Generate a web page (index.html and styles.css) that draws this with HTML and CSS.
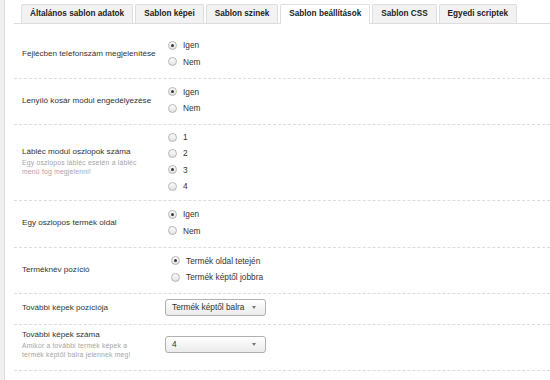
FILE: index.html
```html
<!DOCTYPE html>
<html lang="hu">
<head>
    <meta charset="UTF-8">
    <link rel="stylesheet" href="styles.css">
    <title>Sablon beállítások</title>
</head>
<body>
    <div class="page">
        <div class="side-strip"></div>
        <div class="main">
            <div class="tabs">
                <div class="tab">Általános sablon adatok</div>
                <div class="tab">Sablon képei</div>
                <div class="tab">Sablon szinek</div>
                <div class="tab active">Sablon beállítások</div>
                <div class="tab">Sablon CSS</div>
                <div class="tab">Egyedi scriptek</div>
            </div>

            <div class="tab-content">
                <div class="row">
                    <div class="label">Fejlécben telefonszám megjelenítése</div>
                    <div class="options">
                        <div class="option"><span class="radio checked"></span>Igen</div>
                        <div class="option"><span class="radio"></span>Nem</div>
                    </div>
                </div>

                <div class="row">
                    <div class="label">Lenyíló kosár modul engedélyezése</div>
                    <div class="options">
                        <div class="option"><span class="radio checked"></span>Igen</div>
                        <div class="option"><span class="radio"></span>Nem</div>
                    </div>
                </div>

                <div class="row row-compact">
                    <div class="label">
                        Lábléc modul oszlopok száma
                        <div class="hint">Egy oszlopos lábléc esetén a lábléc menü fog megjelenni!</div>
                    </div>
                    <div class="options">
                        <div class="option"><span class="radio"></span>1</div>
                        <div class="option"><span class="radio"></span>2</div>
                        <div class="option"><span class="radio checked"></span>3</div>
                        <div class="option"><span class="radio"></span>4</div>
                    </div>
                </div>

                <div class="row">
                    <div class="label">Egy oszlopos termék oldal</div>
                    <div class="options">
                        <div class="option"><span class="radio checked"></span>Igen</div>
                        <div class="option"><span class="radio"></span>Nem</div>
                    </div>
                </div>

                <div class="row">
                    <div class="label">Terméknév pozíció</div>
                    <div class="options options-wide">
                        <div class="option"><span class="radio checked"></span>Termék oldal tetején</div>
                        <div class="option"><span class="radio"></span>Termék képtől jobbra</div>
                    </div>
                </div>

                <div class="row">
                    <div class="label">További képek pozíciója</div>
                    <div class="select">Termék képtől balra<span class="arrow"></span></div>
                </div>

                <div class="row row-tall">
                    <div class="label">
                        További képek száma
                        <div class="hint">Amikor a további termék képek a termék képtől balra jelennek meg!</div>
                    </div>
                    <div class="select">4<span class="arrow"></span></div>
                </div>
            </div>
        </div>
    </div>
</body>
</html>
```

FILE: styles.css
```css
body {
    margin: 0;
    font-family: 'Liberation Sans', Arial, sans-serif;
    font-size: 8.1px;
    color: #333;
    background-color: #fff;
}

.page {
    display: flex;
    min-height: 380px;
}

.side-strip {
    width: 4px;
    background-color: #f0f0f0;
    border-right: 1px solid #dcdcdc;
}

.main {
    flex: 1;
    margin-left: 9px;
}

.tabs {
    display: flex;
    gap: 2px;
    padding: 4px 0 0 7px;
    border-bottom: 1px solid #dddddd;
}

.tab {
    flex-shrink: 0;
    white-space: nowrap;
    height: 18px;
    line-height: 18px;
    padding: 0 8px;
    margin-bottom: -1px;
    font-size: 8.2px;
    font-weight: bold;
    color: #222;
    background-color: #f2f2f2;
    border: 1px solid #dddddd;
    border-bottom: none;
    border-radius: 2px 2px 0 0;
}

.tab.active {
    background-color: #fff;
    height: 19px;
}

.tab-content {
    padding-top: 8px;
}

.row {
    display: flex;
    align-items: center;
    padding: 5px 0 7.5px;
    border-bottom: 1px dashed #dcdcdc;
}

.row-compact {
    padding: 4px 0 6px;
}

.row-compact .option {
    height: 16.3px;
}

.row-tall {
    padding: 5px 0 10.5px;
}

.label {
    width: 151px;
    padding-left: 8px;
    box-sizing: border-box;
    white-space: nowrap;
    color: #333;
}

.hint {
    margin-top: 2px;
    width: 118px;
    white-space: normal;
    font-size: 6.8px;
    line-height: 9.5px;
    letter-spacing: 0.2px;
    color: #a5a5a5;
}

.options {
    padding-left: 3px;
}

.options-wide {
    padding-left: 6px;
}

.option {
    display: flex;
    align-items: center;
    height: 16.5px;
    font-size: 8.3px;
    color: #333;
}

.radio {
    width: 7px;
    height: 7px;
    margin-right: 6px;
    border: 1px solid #b5b5b5;
    border-radius: 50%;
    background: linear-gradient(#fdfdfd, #e2e2e2);
    display: flex;
    align-items: center;
    justify-content: center;
}

.radio.checked::after {
    content: "";
    width: 3px;
    height: 3px;
    border-radius: 50%;
    background-color: #3a3a3a;
}

.select {
    position: relative;
    width: 93px;
    height: 15px;
    line-height: 15px;
    padding-left: 6px;
    font-size: 8.3px;
    border: 1px solid #b0b0b0;
    border-radius: 3px;
    background: linear-gradient(#ffffff, #ebebeb);
    color: #333;
}

.arrow {
    position: absolute;
    right: 9px;
    top: 6px;
    border-left: 2.5px solid transparent;
    border-right: 2.5px solid transparent;
    border-top: 3px solid #777;
}
```
